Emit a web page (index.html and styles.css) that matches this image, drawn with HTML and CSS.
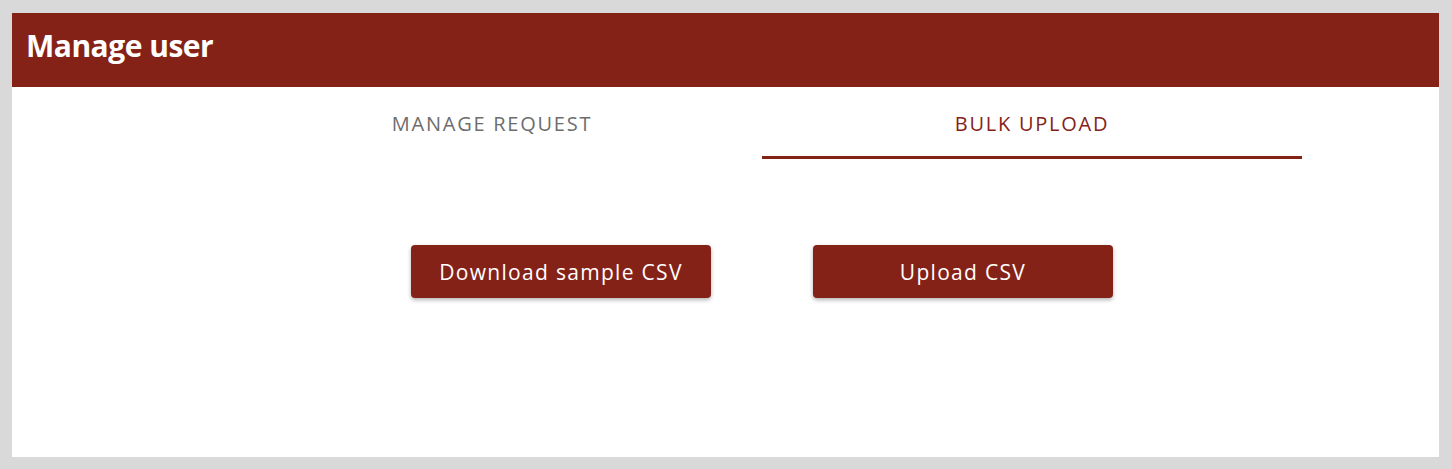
FILE: index.html
```html
<!DOCTYPE html>
<html>
<head>
<meta charset="utf-8">
<link rel="stylesheet" href="styles.css">
</head>
<body>
<div class="card">
  <header class="card-header">
    <h1 class="title">Manage user</h1>
  </header>
  <div class="content">
    <nav class="tabs">
      <div class="tab">MANAGE REQUEST</div>
      <div class="tab tab-active">BULK UPLOAD</div>
    </nav>
    <div class="actions">
      <button class="btn">Download sample CSV</button>
      <button class="btn">Upload CSV</button>
    </div>
  </div>
</div>
</body>
</html>
```

FILE: styles.css
```css
html, body {
  margin: 0;
  padding: 0;
}
body {
  background: #d9d9d9;
  font-family: "Open Sans", "Noto Sans", sans-serif;
  padding: 13px 13px 12px 12px;
}
.card {
  background: #ffffff;
  width: 1427px;
  height: 444px;
  display: flex;
  flex-direction: column;
}
.card-header {
  background: #852218;
  height: 74px;
  box-sizing: border-box;
  display: flex;
  align-items: center;
  padding-left: 14px;
  padding-bottom: 8px;
}
.title {
  margin: 0;
  color: #ffffff;
  font-size: 30px;
  font-weight: 700;
  letter-spacing: -0.5px;
  line-height: 1;
}
.content {
  margin-left: 210px;
  width: 1080px;
}
.tabs {
  display: grid;
  grid-template-columns: 1fr 1fr;
}
.tab {
  text-align: center;
  font-size: 20px;
  letter-spacing: 1.75px;
  color: #6d6d6d;
  padding: 25px 0 20px;
  border-bottom: 3px solid transparent;
  line-height: 24px;
}
.tab-active {
  color: #852218;
  border-bottom-color: #852218;
}
.actions {
  display: flex;
  justify-content: center;
  gap: 102px;
  margin-top: 86px;
}
.btn {
  width: 300px;
  height: 53px;
  background: #852218;
  color: #ffffff;
  border: none;
  border-radius: 4px;
  font-family: "Open Sans", "Noto Sans", sans-serif;
  font-size: 21px;
  font-weight: 500;
  letter-spacing: 1.3px;
  box-shadow: 0 2px 4px rgba(0, 0, 0, 0.3);
  padding: 0;
}
```
